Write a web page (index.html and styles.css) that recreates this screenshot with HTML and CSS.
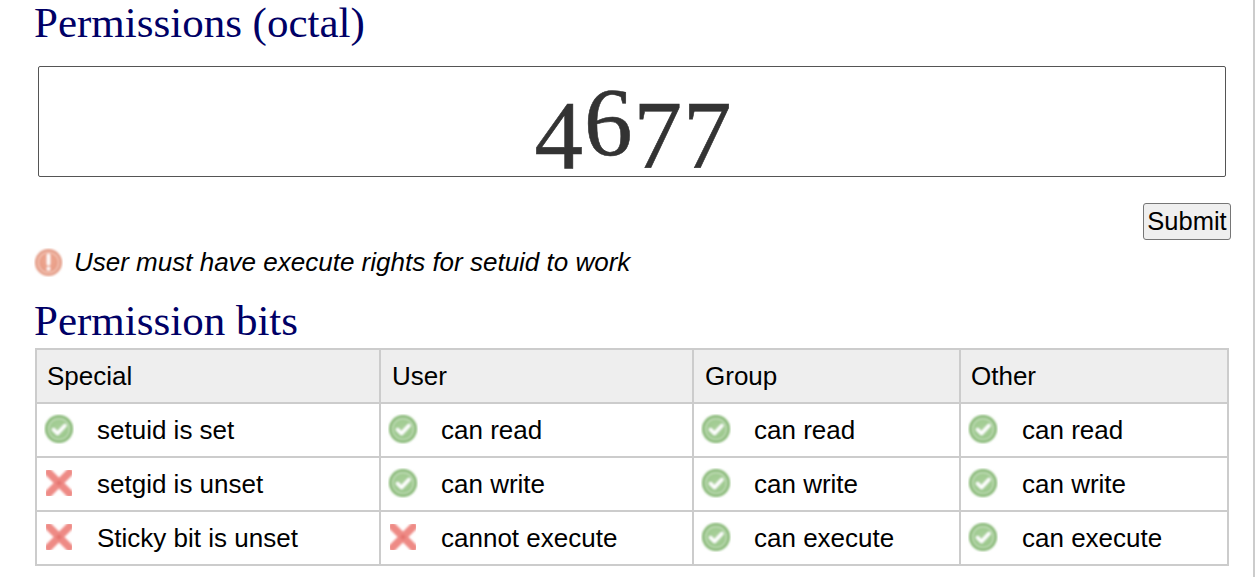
FILE: index.html
```html
<!DOCTYPE html>
<html lang="en">
<head>
<meta charset="utf-8">
<title>Permissions</title>
<link rel="stylesheet" href="styles.css">
</head>
<body>
<svg class="defs" width="0" height="0" aria-hidden="true">
  <defs>
    <radialGradient id="g-ok" cx="50%" cy="45%" r="55%"><stop offset="0" stop-color="#a9d09a"/><stop offset=".75" stop-color="#9fca90"/><stop offset="1" stop-color="#8cbf7c"/></radialGradient>
    <radialGradient id="g-warn" cx="50%" cy="45%" r="55%"><stop offset="0" stop-color="#eea892"/><stop offset=".75" stop-color="#e99f88"/><stop offset="1" stop-color="#df8f78"/></radialGradient>
    <filter id="soft" x="-10%" y="-10%" width="120%" height="120%"><feGaussianBlur stdDeviation="0.9"/></filter>
    <symbol id="ok" viewBox="0 0 30 30">
      <g filter="url(#soft)">
        <circle cx="15" cy="15" r="14" fill="#86b875"/>
        <circle cx="15" cy="15" r="10.5" fill="url(#g-ok)" stroke="#c4dfba" stroke-width="1.5"/>
        <path d="M9.5 15.5l4 4 7.5-8" fill="none" stroke="#fff" stroke-width="3.4" stroke-linecap="round" stroke-linejoin="round"/>
      </g>
    </symbol>
    <symbol id="no" viewBox="0 0 30 30">
      <g filter="url(#soft)">
        <path d="M4.5 4.5L25.5 25.5M25.5 4.5L4.5 25.5" fill="none" stroke="#ee8a85" stroke-width="7.5" stroke-linecap="round"/>
        <circle cx="15" cy="15" r="2.5" fill="#e57570"/>
      </g>
    </symbol>
    <symbol id="warn" viewBox="0 0 30 30">
      <g filter="url(#soft)">
        <circle cx="15" cy="15" r="14" fill="#e39a84"/>
        <circle cx="15" cy="15" r="10.5" fill="url(#g-warn)" stroke="#f5c7b8" stroke-width="1.5"/>
        <path d="M15 7.5v9" stroke="#fff" stroke-width="3.6" stroke-linecap="round"/>
        <circle cx="15" cy="21.5" r="2" fill="#fff"/>
      </g>
    </symbol>
  </defs>
</svg>
<main class="page">
  <h2 class="title title-first">Permissions (octal)</h2>
  <div class="octal" role="textbox" aria-label="Permissions (octal)"><span class="low">4</span><span class="high">6</span><span class="low">7</span><span class="low">7</span></div>
  <div class="actions"><button class="submit" type="button">Submit</button></div>
  <p class="warning"><svg class="icon-warn"><use href="#warn"/></svg><em>User must have execute rights for setuid to work</em></p>
  <h2 class="title title-second">Permission bits</h2>
  <table class="bits">
    <colgroup><col class="c1"><col class="c2"><col class="c3"><col class="c4"></colgroup>
    <thead>
      <tr><th>Special</th><th>User</th><th>Group</th><th>Other</th></tr>
    </thead>
    <tbody>
      <tr>
        <td><svg class="icon"><use href="#ok"/></svg>setuid is set</td>
        <td><svg class="icon"><use href="#ok"/></svg>can read</td>
        <td><svg class="icon"><use href="#ok"/></svg>can read</td>
        <td><svg class="icon"><use href="#ok"/></svg>can read</td>
      </tr>
      <tr>
        <td><svg class="icon"><use href="#no"/></svg>setgid is unset</td>
        <td><svg class="icon"><use href="#ok"/></svg>can write</td>
        <td><svg class="icon"><use href="#ok"/></svg>can write</td>
        <td><svg class="icon"><use href="#ok"/></svg>can write</td>
      </tr>
      <tr>
        <td><svg class="icon"><use href="#no"/></svg>Sticky bit is unset</td>
        <td><svg class="icon"><use href="#no"/></svg>cannot execute</td>
        <td><svg class="icon"><use href="#ok"/></svg>can execute</td>
        <td><svg class="icon"><use href="#ok"/></svg>can execute</td>
      </tr>
    </tbody>
  </table>
</main>
</body>
</html>
```
FILE: styles.css
```css
html, body {
  margin: 0;
  padding: 0;
  height: 577px;
  overflow: hidden;
  background: #fff;
}
body {
  font-family: "Liberation Sans", Arial, sans-serif;
  font-size: 26px;
  color: #000;
}
.defs {
  position: absolute;
}
.page {
  box-sizing: border-box;
  width: 1255px;
  height: 577px;
  padding: 0 0 0 34px;
  border-right: 2px solid #ccc;
}
.title {
  margin: 0;
  font-family: "Liberation Serif", "Times New Roman", serif;
  font-size: 43px;
  font-weight: 400;
  line-height: 46px;
  color: #000066;
}
.title-second {
  margin-top: 21px;
}
.octal {
  box-sizing: border-box;
  width: 1188px;
  height: 111px;
  margin: 20px 0 0 4px;
  border: 1px solid #555;
  border-radius: 2px;
  font-family: "Liberation Serif", "Times New Roman", serif;
  font-size: 97px;
  line-height: 109px;
  letter-spacing: 1px;
  text-indent: 3px;
  -webkit-text-stroke: 0.6px #333;
  text-align: center;
  color: #333;
}
.low, .high {
  position: relative;
}
.low { top: 14px; }
.high { top: 1px; }
.actions {
  display: flex;
  justify-content: flex-end;
  width: 1197px;
  margin-top: 26px;
}
.submit {
  box-sizing: border-box;
  width: 88px;
  height: 37px;
  padding: 0;
  border: 1px solid #767676;
  border-radius: 3px;
  background: #efefef;
  font: 25.5px "Liberation Sans", Arial, sans-serif;
  color: #000;
}
.warning {
  display: flex;
  align-items: center;
  gap: 11px;
  height: 30px;
  margin: 7px 0 0;
  line-height: 30px;
}
.icon-warn {
  width: 29px;
  height: 29px;
  flex: none;
}
.bits {
  width: 1192px;
  margin: 4px 0 0 1px;
  border-collapse: collapse;
  table-layout: fixed;
  border: 2px solid #ccc;
}
.c1 { width: 344px; }
.c2 { width: 313px; }
.c3 { width: 267px; }
.c4 { width: 268px; }
.bits th, .bits td {
  box-sizing: border-box;
  height: 54px;
  padding: 0 0 0 11px;
  border: 2px solid #ccc;
  font-weight: 400;
  text-align: left;
  white-space: nowrap;
}
.bits th:first-child, .bits td:first-child, .bits th:last-child {
  padding-left: 10px;
}
.bits th {
  background: #eee;
}
.icon {
  width: 30px;
  height: 30px;
  margin: -2px 23px 0 -4px;
  vertical-align: -5px;
}
.bits td:first-child .icon {
  margin-left: -3px;
}
.bits td:last-child .icon {
  margin-right: 24px;
}
```
